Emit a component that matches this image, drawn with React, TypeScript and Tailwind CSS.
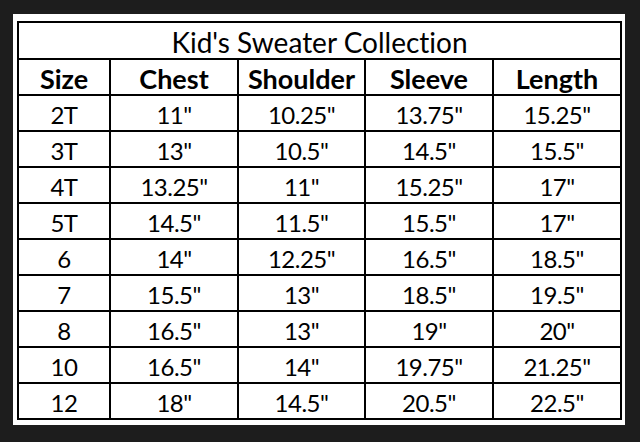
const headers = ["Size", "Chest", "Shoulder", "Sleeve", "Length"]

const rows = [
  ["2T", "11\"", "10.25\"", "13.75\"", "15.25\""],
  ["3T", "13\"", "10.5\"", "14.5\"", "15.5\""],
  ["4T", "13.25\"", "11\"", "15.25\"", "17\""],
  ["5T", "14.5\"", "11.5\"", "15.5\"", "17\""],
  ["6", "14\"", "12.25\"", "16.5\"", "18.5\""],
  ["7", "15.5\"", "13\"", "18.5\"", "19.5\""],
  ["8", "16.5\"", "13\"", "19\"", "20\""],
  ["10", "16.5\"", "14\"", "19.75\"", "21.25\""],
  ["12", "18\"", "14.5\"", "20.5\"", "22.5\""],
]

const widths = ["w-[92px]", "w-[128px]", "w-[127px]", "w-[128px]", "w-[128px]"]

export default function App() {
  return (
    <div className="w-[640px] h-[442px] bg-[#1d1d1d] pt-[14px] pl-[13px] font-['Lato',sans-serif] text-black [font-variant-ligatures:none]">
      <div className="w-[612px] h-[411px] bg-white pt-[7px] pl-[4px]">
        <table className="table-fixed border-collapse border-2 border-black w-[603px]">
          <colgroup>
            {widths.map((w, i) => (
              <col key={i} className={w} />
            ))}
          </colgroup>
          <thead>
            <tr className="h-[37px]">
              <th colSpan={5} className="border-2 border-black text-[28px] font-normal leading-none text-center pt-[2px]">
                Kid's Sweater Collection
              </th>
            </tr>
            <tr className="h-[36px]">
              {headers.map((h) => (
                <th key={h} className="border-2 border-black text-[27px] font-bold leading-none text-center pt-[2px]">
                  {h}
                </th>
              ))}
            </tr>
          </thead>
          <tbody>
            {rows.map((r) => (
              <tr key={r[0]} className="h-[36px]">
                {r.map((c, i) => (
                  <td key={i} className="border-2 border-black text-[24px] tracking-[-0.5px] leading-none text-center pt-[3px]">
                    {c}
                  </td>
                ))}
              </tr>
            ))}
          </tbody>
        </table>
      </div>
    </div>
  )
}
